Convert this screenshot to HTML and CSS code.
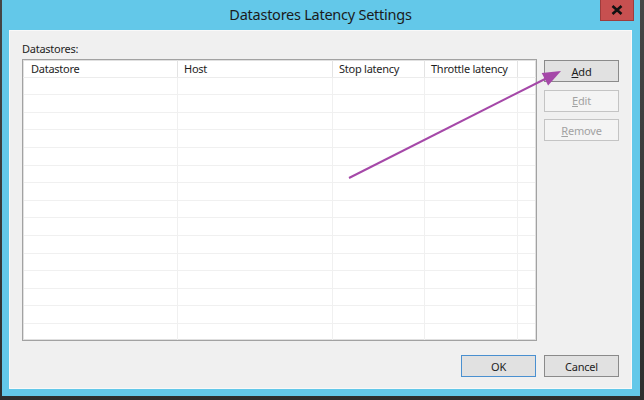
FILE: index.html
```html
<!DOCTYPE html>
<html>
<head>
<meta charset="utf-8">
<link rel="stylesheet" href="styles.css">
</head>
<body>
<div class="screen">
  <div class="frame">
    <div class="titlebar">
      <div class="title">Datastores Latency Settings</div>
      <div class="close">
        <svg width="12" height="10" viewBox="0 0 12 10"><path d="M1.5 1 L10.5 9 M10.5 1 L1.5 9" stroke="#111" stroke-width="2.6" fill="none"/></svg>
      </div>
    </div>
    <div class="client">
      <div class="label">Datastores:</div>
      <div class="main">
        <div class="list">
          <div class="row head">
            <div class="cell">Datastore</div>
            <div class="cell">Host</div>
            <div class="cell">Stop latency</div>
            <div class="cell">Throttle latency</div>
            <div class="cell fill"></div>
          </div>
          <div class="row"><div class="cell"></div><div class="cell"></div><div class="cell"></div><div class="cell"></div><div class="cell fill"></div></div>
          <div class="row"><div class="cell"></div><div class="cell"></div><div class="cell"></div><div class="cell"></div><div class="cell fill"></div></div>
          <div class="row"><div class="cell"></div><div class="cell"></div><div class="cell"></div><div class="cell"></div><div class="cell fill"></div></div>
          <div class="row"><div class="cell"></div><div class="cell"></div><div class="cell"></div><div class="cell"></div><div class="cell fill"></div></div>
          <div class="row"><div class="cell"></div><div class="cell"></div><div class="cell"></div><div class="cell"></div><div class="cell fill"></div></div>
          <div class="row"><div class="cell"></div><div class="cell"></div><div class="cell"></div><div class="cell"></div><div class="cell fill"></div></div>
          <div class="row"><div class="cell"></div><div class="cell"></div><div class="cell"></div><div class="cell"></div><div class="cell fill"></div></div>
          <div class="row"><div class="cell"></div><div class="cell"></div><div class="cell"></div><div class="cell"></div><div class="cell fill"></div></div>
          <div class="row"><div class="cell"></div><div class="cell"></div><div class="cell"></div><div class="cell"></div><div class="cell fill"></div></div>
          <div class="row"><div class="cell"></div><div class="cell"></div><div class="cell"></div><div class="cell"></div><div class="cell fill"></div></div>
          <div class="row"><div class="cell"></div><div class="cell"></div><div class="cell"></div><div class="cell"></div><div class="cell fill"></div></div>
          <div class="row"><div class="cell"></div><div class="cell"></div><div class="cell"></div><div class="cell"></div><div class="cell fill"></div></div>
          <div class="row"><div class="cell"></div><div class="cell"></div><div class="cell"></div><div class="cell"></div><div class="cell fill"></div></div>
          <div class="row"><div class="cell"></div><div class="cell"></div><div class="cell"></div><div class="cell"></div><div class="cell fill"></div></div>
          <div class="row last"><div class="cell"></div><div class="cell"></div><div class="cell"></div><div class="cell"></div><div class="cell fill"></div></div>
        </div>
        <div class="side">
          <button class="btn"><u>A</u>dd</button>
          <button class="btn disabled"><u>E</u>dit</button>
          <button class="btn disabled"><u>R</u>emove</button>
        </div>
      </div>
      <div class="footer">
        <button class="btn default">OK</button>
        <button class="btn">Cancel</button>
      </div>
    </div>
  </div>
  <svg class="arrow" width="644" height="400" viewBox="0 0 644 400">
    <line x1="349" y1="178" x2="550" y2="76.5" stroke="#A548A8" stroke-width="2"/>
    <polygon points="561,71 541.7,72.9 548.1,85.4" fill="#A548A8"/>
  </svg>
</div>
</body>
</html>
```

FILE: styles.css
```css
html, body {
  margin: 0;
  padding: 0;
}
body {
  width: 644px;
  height: 400px;
  overflow: hidden;
  background: #3c3c3c;
  font-family: "Noto Sans", "Open Sans", sans-serif;
}
.screen {
  position: relative;
  width: 644px;
  height: 400px;
  background: linear-gradient(#464646, #2e2e2e);
}
.frame {
  position: relative;
  margin-left: 2px;
  width: 638px;
  height: 396px;
  background: #63c8e9;
  padding: 0 8px 7px 7px;
  box-sizing: border-box;
  display: flex;
  flex-direction: column;
}
.titlebar {
  height: 30px;
  display: flex;
  align-items: center;
  justify-content: center;
}
.title {
  font-size: 14.5px;
  color: #1b1b1b;
  letter-spacing: -0.25px;
  padding-bottom: 2px;
}
.close {
  position: absolute;
  top: 0;
  right: 6px;
  width: 34px;
  height: 21px;
  box-sizing: border-box;
  background: #c75050;
  border: 1px solid #9e3c3c;
  border-top: none;
  display: flex;
  align-items: center;
  justify-content: center;
}
.client {
  flex: 1;
  background: #f0f0f0;
  box-shadow: inset 0 0 0 1px #f9f9f9;
  display: flex;
  flex-direction: column;
  padding: 11px 13px 0 13px;
  font-size: 11px;
  color: #1e1e1e;
}
.label {
  line-height: 15px;
  height: 15px;
  margin-bottom: 3px;
  letter-spacing: -0.25px;
}
.main {
  display: flex;
  gap: 7px;
}
.list {
  width: 515px;
  height: 282px;
  box-sizing: border-box;
  border: 1px solid #a2a2a2;
  background: #fff;
  box-shadow: inset 0 0 0 1px #e0e0e0;
  overflow: hidden;
}
.row {
  display: grid;
  grid-template-columns: 154px 155px 92px 93px 1fr;
  height: 17.6px;
  box-sizing: border-box;
  border-bottom: 1px solid #f0f0f0;
  margin: 0 1px;
}
.row.last {
  border-bottom: none;
}
.row .cell {
  border-right: 1px solid #f0f0f0;
}
.row .cell.fill {
  border-right: none;
}
.row.head {
  border-bottom: 1px solid #ececec;
  margin: 0;
  grid-template-columns: 155px 155px 92px 93px 1fr;
}
.row.head .cell {
  border-right: 1px solid #e3e3e3;
  padding-left: 6px;
  line-height: 17px;
  font-size: 11px;
  letter-spacing: -0.25px;
  white-space: nowrap;
}
.row.head .cell:first-child {
  padding-left: 8px;
}
.row.head .cell.fill {
  border-right: none;
}
.side {
  display: flex;
  flex-direction: column;
  gap: 7.5px;
  padding-top: 1px;
}
.btn {
  width: 75px;
  height: 22px;
  box-sizing: border-box;
  margin: 0;
  padding: 0;
  font-family: "Noto Sans", "Open Sans", sans-serif;
  font-size: 11px;
  letter-spacing: -0.2px;
  color: #1e1e1e;
  background: #e1e1e1;
  border: 1px solid #8a8a8a;
  border-radius: 0;
  line-height: 19px;
}
.btn.disabled {
  background: #f4f4f4;
  border-color: #c4c4c4;
  color: #a2a2a2;
}
.btn.default {
  border-color: #4a90d0;
}
.footer {
  display: flex;
  justify-content: flex-end;
  gap: 8px;
  margin-top: 14px;
}
.arrow {
  position: absolute;
  left: 0;
  top: 0;
  pointer-events: none;
}
```
